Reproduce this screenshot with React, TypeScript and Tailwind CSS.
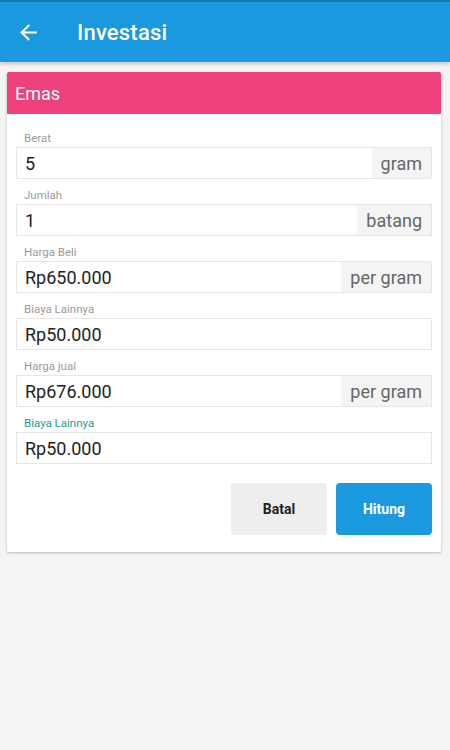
import React from "react";

type Field = { label: string; value: string; suffix?: string; active?: boolean };

const fields: Field[] = [
  { label: "Berat", value: "5", suffix: "gram" },
  { label: "Jumlah", value: "1", suffix: "batang" },
  { label: "Harga Beli", value: "Rp650.000", suffix: "per gram" },
  { label: "Biaya Lainnya", value: "Rp50.000" },
  { label: "Harga jual", value: "Rp676.000", suffix: "per gram" },
  { label: "Biaya Lainnya", value: "Rp50.000", active: true },
];

export default function App() {
  return (
    <div className="w-[450px] h-[750px] bg-[#f4f4f4] font-['Roboto',sans-serif] overflow-hidden">
      {/* App bar */}
      <header className="h-[62px] bg-[#1b99df] border-t-2 border-[#1577ad] flex items-center shadow-[0_2px_4px_rgba(0,0,0,0.2)]">
        <svg viewBox="0 0 24 24" className="w-[25px] h-[25px] ml-[16px] fill-white">
          <path d="M20 11H7.83l5.59-5.59L12 4l-8 8 8 8 1.41-1.41L7.83 13H20v-2z" />
        </svg>
        <h1 className="ml-[36px] text-white text-[22px] font-medium tracking-[0.2px]">Investasi</h1>
      </header>

      {/* Card */}
      <div className="mx-[7px] mt-[10px] w-[434px] bg-white rounded-[2px] shadow-[0_1px_3px_rgba(0,0,0,0.25)] overflow-hidden">
        <div className="h-[42px] bg-[#ee407a] flex items-center px-[8px]">
          <span className="text-white text-[18px]">Emas</span>
        </div>
        <div className="px-[9px] pt-[8px] pb-[17px]">
          {fields.map((f, i) => (
            <div key={i} className="pt-[9px]">
              <div
                className={
                  "h-[14px] leading-[14px] text-[11.5px] pl-[8px] mb-[2px] " +
                  (f.active ? "text-[#1f9a8f]" : "text-[#9a9a9a]")
                }
              >
                {f.label}
              </div>
              <div className="h-[32px] border border-[#e6e6e6] flex items-stretch">
                <div className="flex-1 flex items-center pl-[8px] text-[18px] text-[#222]">{f.value}</div>
                {f.suffix && (
                  <div className="bg-[#f4f4f4] flex items-center px-[9px] text-[18px] text-[#666]">{f.suffix}</div>
                )}
              </div>
            </div>
          ))}
          <div className="flex justify-end gap-[9px] mt-[19px]">
            <button className="w-[96px] h-[52px] bg-[#eeeeee] rounded-[3px] text-[14px] font-bold text-[#222]">
              Batal
            </button>
            <button className="w-[96px] h-[52px] bg-[#1b99df] rounded-[4px] text-[14px] font-bold text-white">
              Hitung
            </button>
          </div>
        </div>
      </div>
    </div>
  );
}
